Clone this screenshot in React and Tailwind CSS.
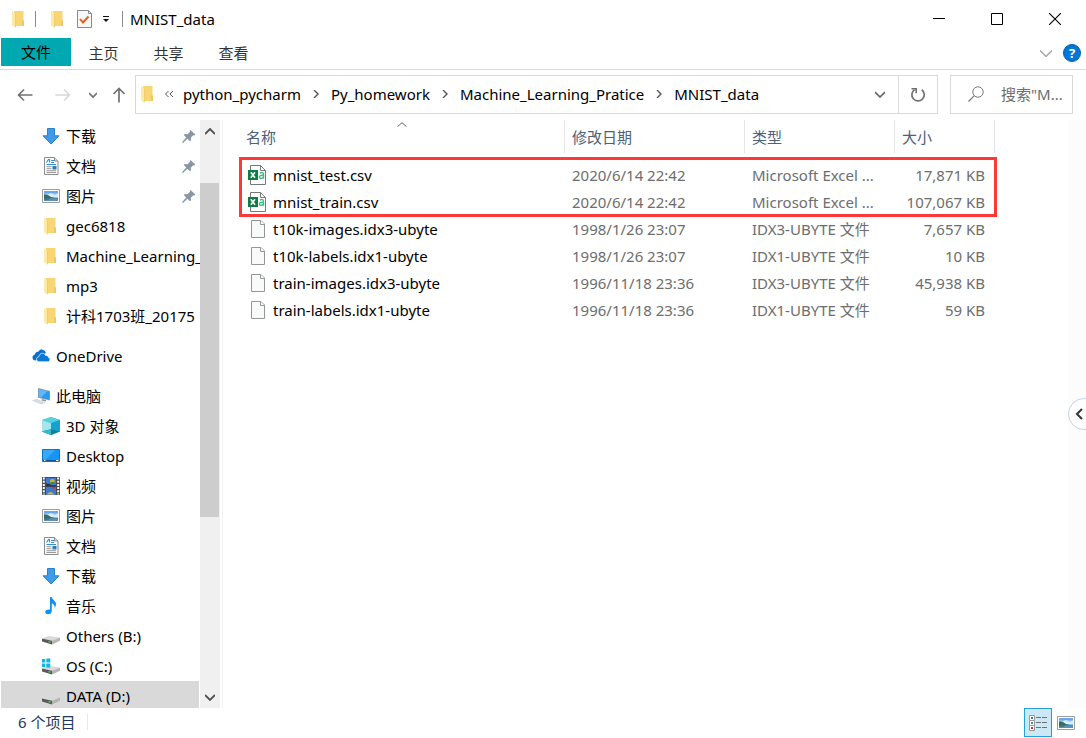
import React from "react";

function Svg({ children, className = "h-[18px] w-[18px]", box = "0 0 18 18" }) {
  return (
    <svg viewBox={box} className={`${className} shrink-0`} fill="none" aria-hidden="true">
      {children}
    </svg>
  );
}

function FolderIcon() {
  return (
    <Svg>
      <path d="M4 1h9.500v9.500l.500.500v5H4z" fill="#f7d673" />
      <path d="M12 10.500h2V16h-2z" fill="#f0c85c" />
      <path d="M2 1l3.500 2.500V18L2 15.500z" fill="#ffe9a6" />
      <path d="M5.500 3.500V17" stroke="#eec65c" strokeWidth=".7" />
    </Svg>
  );
}

function DownloadIcon() {
  return (
    <Svg>
      <path d="M5.500 1.500h7v7.300H17L9 17 1 8.800h4.500z" fill="#3d9bea" stroke="#2b80cc" />
    </Svg>
  );
}

function DocumentIcon() {
  return (
    <Svg>
      <path d="M2.500.5h10l3.500 3.500v13.500H2.500z" fill="#fbfbfb" stroke="#8c8c8c" />
      <path d="M12.500.5V4H16" fill="#ddd" stroke="#8c8c8c" />
      <path d="M4.500 5.500l2-3h1v3M9 3.500h3M9 5.500h3M4.500 7.500h9.500" stroke="#2a8fdb" strokeWidth="1.100" />
      <path d="M4.500 9.700h5M4.500 11.700h5M4.500 13.700h9.500M4.500 15.500h9.500" stroke="#9a9a9a" />
      <path d="M10.500 9h4v3.500h-4z" fill="#2f7fae" />
    </Svg>
  );
}

function PictureIcon() {
  return (
    <Svg>
      <path d="M.5 2.500h17v13H.5z" fill="#fff" stroke="#9c9c9c" />
      <path d="M2 4h14v10H2z" fill="#8fc4f3" />
      <path d="M2 4h14v2.200H2z" fill="#6ba6ee" />
      <path d="M6 7.500q3-2 5-.5t5-.5v3.500H8z" fill="#d8ecfa" />
      <path d="M2 7.500q3-.500 5.500 1.500t8.500 2v.8H2z" fill="#3a6b5c" />
      <path d="M2 11.500h14V14H2z" fill="#5b92b8" />
      <path d="M2 11.500h7l-3 1H2z" fill="#2f5c54" />
    </Svg>
  );
}

function OneDriveIcon() {
  return (
    <Svg>
      <path d="M3.500 13.500A3.200 3.200 0 0 1 .5 10.400C.5 8.900 1.600 7.700 3 7.500 3.200 5.500 4.800 4.500 6.300 4.800 7.400 2.900 9 2.400 10.500 2.700c1.700.3 2.900 1.600 3.300 3.300z" fill="#0a6fd0" />
      <path d="M7.300 14.800c-1.700 0-2.800-1.100-2.800-2.500s1-2.500 2.400-2.600C7.200 7.500 8.600 6.300 10.400 6.300c1.500 0 2.600.8 3.200 2.200 2.200-.2 3 1.100 3 2.200 1 .2 1.400 1 1.400 1.900 0 1.200-.8 2.200-2.100 2.200z" fill="#0a78d7" stroke="#fff" strokeWidth=".7" />
    </Svg>
  );
}

function ComputerIcon() {
  return (
    <Svg>
      <path d="M6 1l12 3v9.500L6 10.800z" fill="#8b98a5" />
      <path d="M6.800 2l10.300 2.700v7.700L6.800 10z" fill="#2899ee" />
      <path d="M6.800 2l8.500 2.200-6 6.400-2.500-.6z" fill="#62b8f7" />
      <path d="M10 12l4 1v1.500l-4.500-1z" fill="#8996a2" />
      <path d="M0 13.500L4.500 12l9 3.200L9.500 17.500z" fill="#c8cdd2" />
      <path d="M2 13.500l8 2.800M4 12.700l8 2.800" stroke="#f0f2f3" strokeWidth=".6" />
    </Svg>
  );
}

function CubeIcon() {
  return (
    <Svg>
      <path d="M9 0l9 3v11.500L9 18 0 14.500V3z" fill="#22b7cf" />
      <path d="M0 3l9-3 9 3-9 3.200z" fill="#59cfdd" />
      <path d="M0 3l9 3.200v6L0 14.500z" fill="#a5e6ee" />
      <path d="M9 6.200L18 3v11.500l-9-2.300z" fill="#14a3ce" />
      <path d="M0 14.500l9-2.300 9 2.300L9 18z" fill="#127f96" />
      <path d="M0 14.500l9-2.300V18z" fill="#35bcc8" />
    </Svg>
  );
}

function DesktopIcon() {
  return (
    <Svg>
      <path d="M.5 2.500h17v12H.5z" fill="#1795f4" stroke="#0876ca" />
      <path d="M1 3h12L4 12.500H1z" fill="#38a8fa" />
      <path d="M1 13.500h16" stroke="#08539a" />
      <path d="M2 13.500h1.500M14 13.500h2.500" stroke="#fff" />
    </Svg>
  );
}

function VideoIcon() {
  return (
    <Svg>
      <path d="M0 0h18v18H0z" fill="#4a4a4a" />
      <path d="M1.800.5v17M16.200.5v17" stroke="#fff" strokeWidth="2" strokeDasharray="2 1.200" />
      <path d="M4 1h10v7.500H4zM4 9.500h10V18H4z" fill="#3c7ad5" />
      <path d="M8 3q2.500-2 4.500 0v3H8z" fill="#c8b13a" />
      <path d="M8.500 5h4v2h-4z" fill="#3e8c34" />
      <path d="M4 6.500l4 .5 1 1.500H4z" fill="#333" />
      <path d="M10 10h3v1.500h-3z" fill="#c33a2c" />
      <path d="M5 17q3.500-4 7 0v.5H5z" fill="#d6b13b" />
      <path d="M4 9h10" stroke="#222" />
    </Svg>
  );
}

function MusicIcon() {
  return (
    <Svg>
      <path d="M8 0h1.800c.3 2.800 4.200 3.800 4.200 7.300 0 1.500-.7 2.700-1.500 3.700.5-2.400-.6-4-2.700-4.700V14c0 2-1.700 3.300-3.700 3.300-1.700 0-2.900-.9-2.900-2.200 0-1.500 1.500-2.600 3.200-2.600.6 0 1.200.1 1.600.3z" fill="#0c94ef" />
    </Svg>
  );
}

function DriveBody() {
  return (
    <>
      <path d="M0 11.500L6.500 9 18 10.500l-8 3.200z" fill="#d9d9d9" />
      <path d="M0 11.500l10 2.200V17.500L0 14.500z" fill="#5a5a5a" />
      <path d="M10 13.700l8-3.200v3.200l-8 3.800z" fill="#b4b4b4" />
      <path d="M6.500 14.700l2 .5" stroke="#3be04a" strokeWidth="1.300" />
    </>
  );
}

function DriveIcon() {
  return (
    <Svg>
      <DriveBody />
    </Svg>
  );
}

function SystemDriveIcon() {
  return (
    <Svg>
      <DriveBody />
      <path d="M0 2h3.300v3.500H0zM4.300 1.500h4v4h-4zM0 6.500h3.300V10H0zM4.300 6.500h4v4h-4z" fill="#12b5ea" />
    </Svg>
  );
}

function PinIcon() {
  return (
    <Svg className="h-[14px] w-[14px]" box="0 0 14 14">
      <path d="M8.500 1l4.800 4.600-1 .9-1-.3-2.500 2.500.2 2.500-1 1-2.600-2.500L1 14 0 13.200l4.200-4.600L1.800 6.100l1-1 2.700.2 2.600-2.500-.4-1z" fill="#8996a3" />
    </Svg>
  );
}

function BlankFileIcon() {
  return (
    <Svg>
      <path d="M3.500.5h9.500l3.500 3.500v13.500h-13z" fill="#f9fafa" stroke="#969696" />
      <path d="M12.500.5V4.500h4" fill="#fff" stroke="#969696" />
    </Svg>
  );
}

function CsvIcon() {
  return (
    <Svg className="h-5 w-[18px]" box="0 0 18 20">
      <path d="M2.500.5h10l5 5V19.500h-15z" fill="#fff" stroke="#777" />
      <path d="M12.500.5v5h5" stroke="#777" />
      <path d="M0 5h10v10H0z" fill="#107c41" />
      <path d="M2.800 7.300l4.200 5.400M7 7.300l-4.200 5.400" stroke="#fff" strokeWidth="1.600" />
      <path d="M11.800 8q3.700-1.300 3.700 1.200v4.500M15.500 10.300q-4-.2-4 1.600 0 1.500 1.600 1.500t2.400-1.500" stroke="#33c481" strokeWidth="1.400" />
    </Svg>
  );
}

function Chevron({ className = "h-2 w-2", path = "M2 0l4 4-4 4", width = 1.4, box = "0 0 8 8" }) {
  return (
    <Svg className={className} box={box}>
      <path d={path} stroke="currentColor" strokeWidth={width} />
    </Svg>
  );
}

const groups = [
  [
    { label: "下载", icon: DownloadIcon, pinned: true },
    { label: "文档", icon: DocumentIcon, pinned: true },
    { label: "图片", icon: PictureIcon, pinned: true },
    { label: "gec6818", icon: FolderIcon },
    { label: "Machine_Learning_", icon: FolderIcon },
    { label: "mp3", icon: FolderIcon },
    { label: "计科1703班_20175", icon: FolderIcon },
  ],
  [{ label: "OneDrive", icon: OneDriveIcon, root: true }],
  [
    { label: "此电脑", icon: ComputerIcon, root: true },
    { label: "3D 对象", icon: CubeIcon },
    { label: "Desktop", icon: DesktopIcon },
    { label: "视频", icon: VideoIcon },
    { label: "图片", icon: PictureIcon },
    { label: "文档", icon: DocumentIcon },
    { label: "下载", icon: DownloadIcon },
    { label: "音乐", icon: MusicIcon },
    { label: "Others (B:)", icon: DriveIcon },
    { label: "OS (C:)", icon: SystemDriveIcon },
    { label: "DATA (D:)", icon: DriveIcon, selected: true },
  ],
];

const files = [
  ["mnist_test.csv", "2020/6/14 22:42", "Microsoft Excel ...", "17,871 KB", CsvIcon],
  ["mnist_train.csv", "2020/6/14 22:42", "Microsoft Excel ...", "107,067 KB", CsvIcon],
  ["t10k-images.idx3-ubyte", "1998/1/26 23:07", "IDX3-UBYTE 文件", "7,657 KB", BlankFileIcon],
  ["t10k-labels.idx1-ubyte", "1998/1/26 23:07", "IDX1-UBYTE 文件", "10 KB", BlankFileIcon],
  ["train-images.idx3-ubyte", "1996/11/18 23:36", "IDX3-UBYTE 文件", "45,938 KB", BlankFileIcon],
  ["train-labels.idx1-ubyte", "1996/11/18 23:36", "IDX1-UBYTE 文件", "59 KB", BlankFileIcon],
];

const crumbs = ["python_pycharm", "Py_homework", "Machine_Learning_Pratice", "MNIST_data"];

function TitleBar() {
  return (
    <header className="flex h-[38px] shrink-0 items-center pl-[10px]">
      <FolderIcon />
      <span className="ml-[7px] h-4 w-px bg-[#8a8a8a]" />
      <button aria-label="属性" className="ml-[13px]">
        <FolderIcon />
      </button>
      <button aria-label="选择" className="ml-[9px]">
        <Svg>
          <path d="M1.500.5h11L15.500 3.500v14h-14z" fill="#f7f7f7" stroke="#858b91" />
          <path d="M12.500.5v3h3" stroke="#858b91" />
          <path d="M4 9l3 3.500 5.500-6" stroke="#ee5a14" strokeWidth="1.900" />
        </Svg>
      </button>
      <button aria-label="自定义快速访问工具栏" className="ml-2">
        <Svg className="h-2 w-2" box="0 0 8 8">
          <path d="M1 1.500h6" stroke="#111" />
          <path d="M1 4h6L4 7z" fill="#111" />
        </Svg>
      </button>
      <span className="ml-3 h-4 w-px bg-[#8a8a8a]" />
      <h1 className="ml-[7px]">MNIST_data</h1>
      <div className="ml-auto flex self-stretch">
        <button aria-label="最小化" className="flex w-[58px] items-center justify-center">
          <Svg className="h-3 w-3" box="0 0 12 12">
            <path d="M0 5.500h12" stroke="#000" />
          </Svg>
        </button>
        <button aria-label="最大化" className="flex w-[58px] items-center justify-center">
          <Svg className="h-3 w-3" box="0 0 12 12">
            <path d="M.5.5h11v11H.5z" stroke="#000" />
          </Svg>
        </button>
        <button aria-label="关闭" className="mr-[2px] flex w-[58px] items-center justify-center">
          <Svg className="h-3 w-3" box="0 0 12 12">
            <path d="M0 0l12 12M12 0L0 12" stroke="#000" strokeWidth="1.100" />
          </Svg>
        </button>
      </div>
    </header>
  );
}

function Ribbon() {
  return (
    <nav className="flex h-8 shrink-0 items-start border-b border-[#dadada] pl-px">
      <button className="h-7 w-[70px] bg-[#00a8b1]">文件</button>
      {["主页", "共享", "查看"].map((t) => (
        <button key={t} className="h-[30px] w-[65px] text-[#333]">
          {t}
        </button>
      ))}
      <button aria-label="展开功能区" className="ml-auto flex h-[30px] items-center text-[#a0a0a0]">
        <Chevron className="h-[7px] w-3" box="0 0 12 7" path="M0 .5l6 6 6-6" width={1.3} />
      </button>
      <button aria-label="帮助" className="mt-[6px] mr-[5px] ml-[11px] flex h-[18px] w-[18px] items-center justify-center rounded-full border border-[#0a5fa8] bg-[#0078d7] text-[13px] font-bold leading-none text-white">
        ?
      </button>
    </nav>
  );
}

function AddressRow() {
  return (
    <div className="flex h-[50px] shrink-0 pt-[5px] pr-[13px]">
      <div className="flex h-[39px] w-[135px] shrink-0 items-center pl-[17px] text-[#727272]">
        <button aria-label="后退">
          <Svg className="h-4 w-4" box="0 0 16 16">
            <path d="M15.500 8H1.500M7 2.500L1.500 8 7 13.500" stroke="currentColor" strokeWidth="1.600" />
          </Svg>
        </button>
        <button aria-label="前进" className="ml-[22px] text-[#d8d8d8]">
          <Svg className="h-4 w-4" box="0 0 16 16">
            <path d="M.5 8h14M9 2.500L14.500 8 9 13.500" stroke="currentColor" strokeWidth="1.500" />
          </Svg>
        </button>
        <button aria-label="最近浏览的位置" className="ml-[18px]">
          <Chevron path="M0 2l4 4 4-4" width={1.7} />
        </button>
        <button aria-label="上移" className="ml-[14px]">
          <Svg className="h-4 w-4" box="0 0 16 16">
            <path d="M8 15.500V1.500M2.500 7L8 1.500 13.500 7" stroke="currentColor" strokeWidth="1.700" />
          </Svg>
        </button>
      </div>
      <div className="flex h-[39px] min-w-0 flex-1 border border-[#d9d9d9]">
        <div className="flex min-w-0 flex-1 items-center pb-[2px] pl-[3px]">
          <FolderIcon />
          <span className="ml-[7px] flex text-[#555]">
            <Chevron className="h-2 w-[10px]" box="0 0 10 8" path="M4.500 1l-3 3 3 3M9 1L6 4l3 3" width={1} />
          </span>
          {crumbs.map((c, i) => (
            <React.Fragment key={c}>
              {i > 0 && (
                <span className="mx-[11px] flex text-[#555]">
                  <Chevron />
                </span>
              )}
              <a href="#" className={i === 0 ? "ml-[9px] whitespace-nowrap" : "whitespace-nowrap"}>
                {c}
              </a>
            </React.Fragment>
          ))}
        </div>
        <button aria-label="上一个位置" className="flex w-9 items-center justify-center text-[#666]">
          <Chevron className="h-[7px] w-[10px]" box="0 0 10 7" path="M0 1l5 5 5-5" width={1.7} />
        </button>
        <button aria-label="刷新" className="flex w-[39px] items-center justify-center border-l border-[#d9d9d9] text-[#707070]">
          <Svg className="h-4 w-4" box="0 0 16 16">
            <path d="M11.800 2.800A6.200 6.200 0 1 1 4.600 2.600" stroke="currentColor" strokeWidth="1.700" />
            <path d="M1.500 1.700h4.700v4.500" stroke="currentColor" strokeWidth="1.600" />
          </Svg>
        </button>
      </div>
      <label className="ml-3 flex h-[39px] w-[123px] shrink-0 items-center border border-[#d9d9d9] pb-[2px] pl-[17px]">
        <Svg className="h-4 w-4" box="0 0 16 16">
          <circle cx="10" cy="6" r="5.200" stroke="#7a7a7a" />
          <path d="M6.300 9.700L.5 15.500" stroke="#7a7a7a" strokeWidth="1.200" />
        </Svg>
        <input aria-label="搜索" placeholder={'搜索"M...'} className="ml-[17px] w-[70px] min-w-0 bg-transparent outline-none placeholder:text-[#6d6d6d]" />
      </label>
    </div>
  );
}

function Sidebar() {
  return (
    <aside className="flex w-[223px] shrink-0 border-r border-[#f3f3f3]">
      <div className="flex w-[200px] flex-col gap-[10px] overflow-hidden pt-px pr-px pl-px">
        {groups.map((g, i) => (
          <ul key={i} className="shrink-0">
            {g.map(({ label, icon: Icon, pinned, root, selected }) => (
              <li key={label}>
                <a
                  href="#"
                  className={`flex h-[30px] items-center gap-[6px] ${root ? "pl-[31px]" : "pl-[41px]"} ${selected ? "bg-[#d9d9d9]" : ""}`}
                >
                  <Icon />
                  <span className="flex-1 whitespace-nowrap">{label}</span>
                  {pinned && (
                    <span className="mr-[3px]">
                      <PinIcon />
                    </span>
                  )}
                </a>
              </li>
            ))}
          </ul>
        ))}
      </div>
      <div className="flex w-5 flex-col bg-[#f0f0f0] pr-px text-[#505050]">
        <button aria-label="向上滚动" className="flex h-[22px] items-center justify-center">
          <Chevron className="h-[7px] w-[10px]" box="0 0 10 7" path="M0 6l5-5 5 5" width={1.8} />
        </button>
        <div className="flex flex-1 flex-col">
          <div className="grow-[41]" />
          <div className="grow-[334] bg-[#cdcdcd]" />
          <div className="grow-[169]" />
        </div>
        <button aria-label="向下滚动" className="flex h-[22px] items-center justify-center">
          <Chevron className="h-[7px] w-[10px]" box="0 0 10 7" path="M0 1l5 5 5-5" width={1.8} />
        </button>
      </div>
    </aside>
  );
}

const columns = ["名称", "修改日期", "类型", "大小"];

function FileTable() {
  return (
    <div className="relative self-start">
      <table className="w-[756px] table-fixed border-collapse text-left">
        <colgroup>
          <col className="w-[326px]" />
          <col className="w-[180px]" />
          <col className="w-[150px]" />
          <col className="w-[100px]" />
        </colgroup>
        <thead>
          <tr>
            {columns.map((c, i) => (
              <th key={c} className="p-0 pb-2 font-normal text-[#4c607a]">
                <div className="relative flex h-[33px] items-center border-r border-[#e5e5e5] pl-[7px]">
                  {c}
                  {i === 0 && (
                    <span className="absolute inset-x-0 top-[2px] flex justify-center text-[#666]">
                      <Chevron className="h-[5px] w-[10px]" box="0 0 10 5" path="M.5 4.700L5 .7l4.500 4" width={1} />
                    </span>
                  )}
                </div>
              </th>
            ))}
          </tr>
        </thead>
        <tbody>
          {files.map(([name, date, type, size, Icon]) => (
            <tr key={name} className="h-[27px] text-[#6d6d6d]">
              <td className="p-0 pl-[9px]">
                <div className="flex items-center gap-[7px] text-black">
                  <Icon />
                  <span>{name}</span>
                </div>
              </td>
              <td className="p-0 pl-[7px]">{date}</td>
              <td className="p-0 pl-[7px]">{type}</td>
              <td className="p-0 pr-[10px] text-right">{size}</td>
            </tr>
          ))}
        </tbody>
      </table>
      <div className="pointer-events-none absolute top-[37px] left-0 h-[60px] w-[758px] border-3 border-[#fc3838]" />
    </div>
  );
}

function StatusBar() {
  return (
    <footer className="flex h-[30px] shrink-0 items-start pl-[18px] text-[#1e395b]">
      <span className="flex h-7 items-center">6 个项目</span>
      <span className="mt-[6px] ml-3 h-4 w-px bg-[#e8e8e8]" />
      <button aria-label="详细信息" className="ml-auto flex h-[29px] w-7 items-center justify-center border border-[#26a0da] bg-[#cce8f6]">
        <Svg>
          {[1, 6, 11].map((y, i) => (
            <g key={y}>
              <path d={`M.5 ${y + 0.5}h5v5h-5z`} fill="#fff" stroke="#999" />
              <path d={`M2 ${y + 2}h2v2H2z`} fill={["#3b7da0", "#557fae", "#d03a1e"][i]} />
              <path d={`M7 ${y + 2.5}h5M13 ${y + 2.5}h5`} stroke="#707070" />
            </g>
          ))}
        </Svg>
      </button>
      <button aria-label="大图标" className="mr-[6px] flex h-[29px] w-7 items-center justify-center">
        <PictureIcon />
      </button>
    </footer>
  );
}

export default function App() {
  return (
    <div className="flex h-screen flex-col overflow-hidden bg-white font-['Noto_Sans','Noto_Sans_CJK_SC',sans-serif] text-[15px] leading-5 text-black">
      <TitleBar />
      <Ribbon />
      <AddressRow />
      <div className="flex min-h-0 flex-1">
        <Sidebar />
        <main className="flex min-w-0 flex-1 pl-4">
          <FileTable />
          <div className="ml-auto flex w-[18px] shrink-0 items-center overflow-hidden bg-[#fcfcfc]">
            <button aria-label="展开窗格" className="flex h-8 w-8 shrink-0 items-center rounded-full border border-[#c3d3e6] bg-white pl-[6px] text-[#333]">
              <Chevron className="h-3 w-2" box="0 0 8 12" path="M7 1L2 6l5 5" width={2} />
            </button>
          </div>
        </main>
      </div>
      <StatusBar />
    </div>
  );
}
